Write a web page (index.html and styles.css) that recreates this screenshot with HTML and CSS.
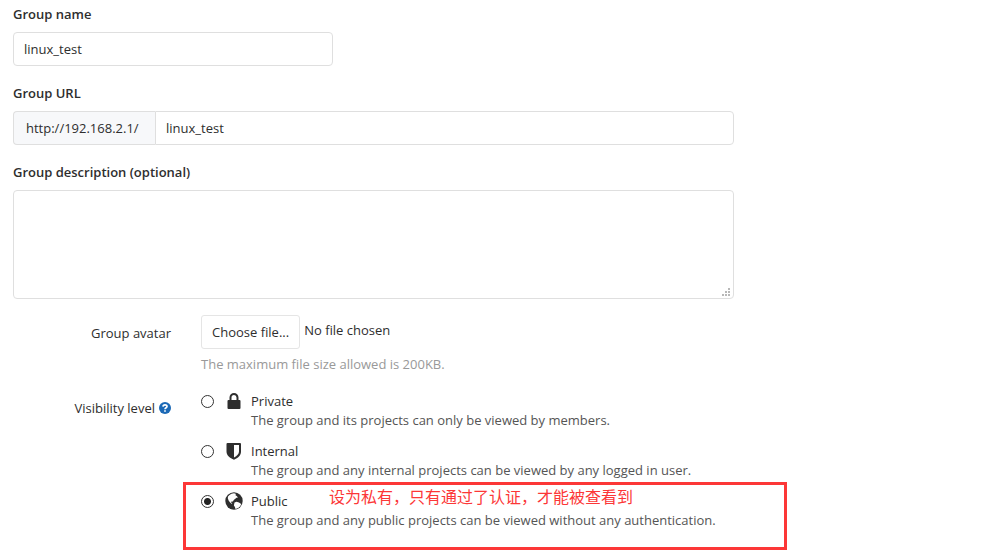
FILE: index.html
```html
<!DOCTYPE html>
<html lang="en">
<head>
<meta charset="utf-8">
<meta name="viewport" content="width=device-width, initial-scale=1">
<title>Group settings</title>
<link rel="stylesheet" href="styles.css">
</head>
<body>
<form class="group-form">
  <div class="field">
    <label class="field-label" for="group-name">Group name</label>
    <input class="control control-short" id="group-name" type="text" value="linux_test">
  </div>
  <div class="field">
    <label class="field-label" for="group-path">Group URL</label>
    <div class="input-group">
      <span class="prefix">http://192.168.2.1/</span>
      <input class="control control-path" id="group-path" type="text" value="linux_test">
    </div>
  </div>
  <div class="field">
    <label class="field-label" for="group-description">Group description (optional)</label>
    <div class="textarea-wrap">
      <textarea class="control control-area" id="group-description"></textarea>
      <svg class="grip" viewBox="0 0 8 8" aria-hidden="true"><path d="M6 0h2v2H6zM3 3h2v2H3zM6 3h2v2H6zM0 6h2v2H0zM3 6h2v2H3zM6 6h2v2H6z"/></svg>
    </div>
  </div>
  <div class="row row-avatar">
    <label class="row-label" for="choose-file">Group avatar</label>
    <div class="row-body">
      <div class="file-line">
        <button class="file-button" id="choose-file" type="button">Choose file...</button>
        <span class="file-name">No file chosen</span>
      </div>
      <p class="help-text">The maximum file size allowed is 200KB.</p>
    </div>
  </div>
  <div class="row" role="radiogroup" aria-labelledby="visibility-label">
    <div class="row-label row-label-visibility">
      <span id="visibility-label">Visibility level</span>
      <a class="help-link" href="#" aria-label="Help"><svg viewBox="0 0 12 12" aria-hidden="true"><circle cx="6" cy="6" r="6" fill="currentColor"/><path d="M4 4.6C4.1 2.4 8 2.3 8 4.5 8 5.9 6 5.6 6 7.3M6 8.2v1.6" fill="none" stroke="#fff" stroke-width="1.7"/></svg></a>
    </div>
    <div class="row-body options">
      <div class="option">
        <input class="radio" type="radio" name="visibility" id="private">
        <svg class="icon" viewBox="0 0 18 18" aria-hidden="true"><path d="M4.500 8V5.500a4.500 4.500 0 0 1 9 0V8h1q1 0 1 1v7q0 1-1 1h-11q-1 0-1-1V9q0-1 1-1zm2 0h5V5.500a2.500 2.500 0 0 0-5 0z"/></svg>
        <label class="option-text" for="private"><span class="option-title">Private</span><span class="option-note">The group and its projects can only be viewed by members.</span></label>
      </div>
      <div class="option">
        <input class="radio" type="radio" name="visibility" id="internal">
        <svg class="icon" viewBox="0 0 18 18" aria-hidden="true"><path fill-rule="evenodd" d="M2.500 1h12.500q1 0 1 1v7.500c0 4-3 6.400-7 8.300-4-1.900-7.500-4.300-7.500-8.300V2q0-1 1-1zM9 3v12.400c3-1.700 5-3.500 5-6V3z"/></svg>
        <label class="option-text" for="internal"><span class="option-title">Internal</span><span class="option-note">The group and any internal projects can be viewed by any logged in user.</span></label>
      </div>
      <div class="option option-public">
        <input class="radio" type="radio" name="visibility" id="public" checked>
        <svg class="icon" viewBox="0 0 18 18" aria-hidden="true"><circle cx="9" cy="9" r="8.700"/><path class="land" d="M4.500 3 6.500 1.700l2.500-.5 2.200.7-1 1.200 1.500.8 1.300 1.500-1.500.4-1.200 1-1.500 1.200-.9 1.500-1.500.1-.2 1.100 1.200.7-1 .3-1.500-1.500-1.300-1.600-.8-2.400.2-1.700zM9.500 10.500l2-.7 2.500.7 2.200 1.500-1 2.200-2 1.700-2.700 1.100-.6-1.900-1-1.600z"/></svg>
        <label class="option-text" for="public"><span class="option-title">Public</span><span class="option-note">The group and any public projects can be viewed without any authentication.</span></label>
        <div class="callout" lang="zh-CN">设为私有，只有通过了认证，才能被查看到</div>
      </div>
    </div>
  </div>
</form>
</body>
</html>
```
FILE: styles.css
```css
* { box-sizing: border-box; }

body {
  min-height: 100vh;
  margin: 0;
  padding: 4px 13px 8px;
  background: #fff;
  color: #2e2e2e;
  font: 13px/20px "Open Sans", "Noto Sans CJK SC", sans-serif;
}

.group-form { max-width: 721px; }

.field { margin-bottom: 17px; }

.field-label {
  display: block;
  margin-bottom: 8px;
  font-weight: 600;
}

.control {
  display: block;
  width: 100%;
  height: 34px;
  padding: 6px 10px;
  border: 1px solid #dfdfdf;
  border-radius: 4px;
  background: #fff;
  color: inherit;
  font: inherit;
}

.control-short { max-width: 320px; }

.input-group { display: flex; }

.prefix {
  min-width: 142px;
  padding: 6px 12px;
  border: 1px solid #dfdfdf;
  border-right: 0;
  border-radius: 4px 0 0 4px;
  background: #f7f8fa;
}

.control-path {
  flex: 1;
  min-width: 0;
  border-radius: 0 4px 4px 0;
}

.textarea-wrap { position: relative; }

.control-area {
  height: 109px;
  resize: none;
}

.grip {
  position: absolute;
  right: 4px;
  bottom: 3px;
  width: 8px;
  height: 8px;
  fill: #b8b8b8;
  pointer-events: none;
}

.row {
  display: grid;
  grid-template-columns: 158px 1fr;
  column-gap: 30px;
}

.row-avatar {
  margin-top: -1px;
  margin-bottom: 17px;
}

.row-label {
  padding-top: 8px;
  text-align: right;
}

.row-label-visibility {
  display: flex;
  align-items: center;
  justify-content: flex-end;
  gap: 4px;
  height: 26px;
}

.help-link {
  width: 12px;
  height: 12px;
  color: #1b69b6;
}

.help-link svg { display: block; }

.file-line {
  display: flex;
  gap: 4px;
}

.file-button {
  height: 34px;
  padding: 6px 10px;
  border: 1px solid #e5e5e5;
  border-radius: 3px;
  background: #fff;
  color: inherit;
  font: inherit;
}

.file-name { padding-top: 5px; }

.help-text {
  margin: 5px 0 0;
  color: #999;
}

.option {
  position: relative;
  display: grid;
  grid-template-columns: 24px 26px 1fr;
  height: 50px;
}

.option-public { height: 58px; }

.radio {
  width: 13px;
  height: 13px;
  margin: 4px 0 0;
  appearance: none;
  border: 1px solid #333;
  border-radius: 50%;
  background: #fff;
}

.radio:checked {
  background: radial-gradient(circle, #222 0 3px, #fff 4px);
}

.icon {
  width: 18px;
  height: 18px;
  margin-top: 1px;
  fill: #2e2e2e;
}

.icon .land { fill: #fff; }

.option-title,
.option-note {
  display: block;
  line-height: 19px;
}

.option-title { padding-top: 1px; }

.option-note { color: #555; }

.callout {
  position: absolute;
  top: -9px;
  left: -18px;
  width: 604px;
  height: 68px;
  padding: 1px 143px;
  border: 3px solid #fc3737;
  color: #fc3737;
  font: 16px/20px "Noto Sans CJK SC", sans-serif;
  white-space: nowrap;
  pointer-events: none;
}
```
